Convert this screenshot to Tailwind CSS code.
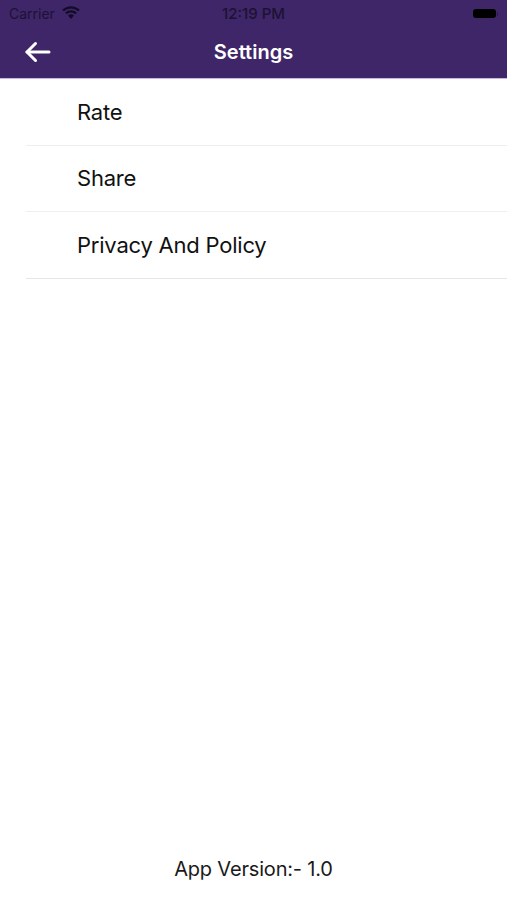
<!DOCTYPE html>
<html>
<head>
<meta charset="utf-8">
<script src="https://cdn.jsdelivr.net/npm/@tailwindcss/browser@4"></script>
</head>
<body class="bg-white font-['Inter','Liberation_Sans',sans-serif]">
<div class="w-[507px] h-[900px] flex flex-col overflow-hidden bg-white">
  <header class="h-[79px] shrink-0 bg-[#3f2669] border-b border-[#c9b8e0] flex flex-col">
    <div class="h-[27px] px-[9px] flex items-center justify-between relative text-[#1c1233]">
      <div class="flex items-center gap-[7px]">
        <span class="text-[14px] leading-none">Carrier</span>
        <svg width="18" height="13" viewBox="0 0 18 13" class="-mt-[3px]"><path fill="#140c26" d="M9 13 L6 9.6 A4.5 4.5 0 0 1 12 9.6 Z"/><path fill="none" stroke="#140c26" stroke-width="2.2" d="M3.9 7.4 A7.4 7.4 0 0 1 14.1 7.4"/><path fill="none" stroke="#140c26" stroke-width="2.2" d="M1 4.5 A11.6 11.6 0 0 1 17 4.5"/></svg>
      </div>
      <span class="absolute left-0 right-0 text-center text-[15px] font-medium leading-none">12:19 PM</span>
      <div class="w-[26px] h-[11px] flex items-center -mr-[1px]">
        <div class="w-[23px] h-[9px] rounded-[3px] bg-black"></div>
        <div class="w-[1px] h-[4px] bg-[#2a1a48] ml-[1px]"></div>
      </div>
    </div>
    <div class="flex-1 relative flex items-center justify-center pb-[2px]">
      <svg width="26" height="22" viewBox="0 0 26 22" class="absolute left-[25px] top-[14px]" fill="none" stroke="#fff" stroke-width="3" stroke-linecap="round" stroke-linejoin="round"><path d="M2 11H24"/><path d="M10.5 2.5L2 11L10.5 19.5"/></svg>
      <h1 class="text-[20px] font-semibold text-white leading-none">Settings</h1>
    </div>
  </header>
  <ul class="text-[#111] text-[22px] tracking-[-0.22px]">
    <li class="h-[66.5px] ml-[26px] pl-[51px] pt-[2px] flex items-center border-b border-[#eeeeee]">Rate</li>
    <li class="h-[66.5px] ml-[26px] pl-[51px] pt-[1px] flex items-center border-b border-[#eeeeee]">Share</li>
    <li class="h-[66.5px] ml-[26px] pl-[51px] pt-[2px] flex items-center border-b border-[#e6e6e6]">Privacy And Policy</li>
  </ul>
  <div class="mt-auto h-[46px] flex justify-center text-[20px] tracking-[-0.18px] text-[#1a1a1a]">App Version:- 1.0</div>
</div>
</body>
</html>
